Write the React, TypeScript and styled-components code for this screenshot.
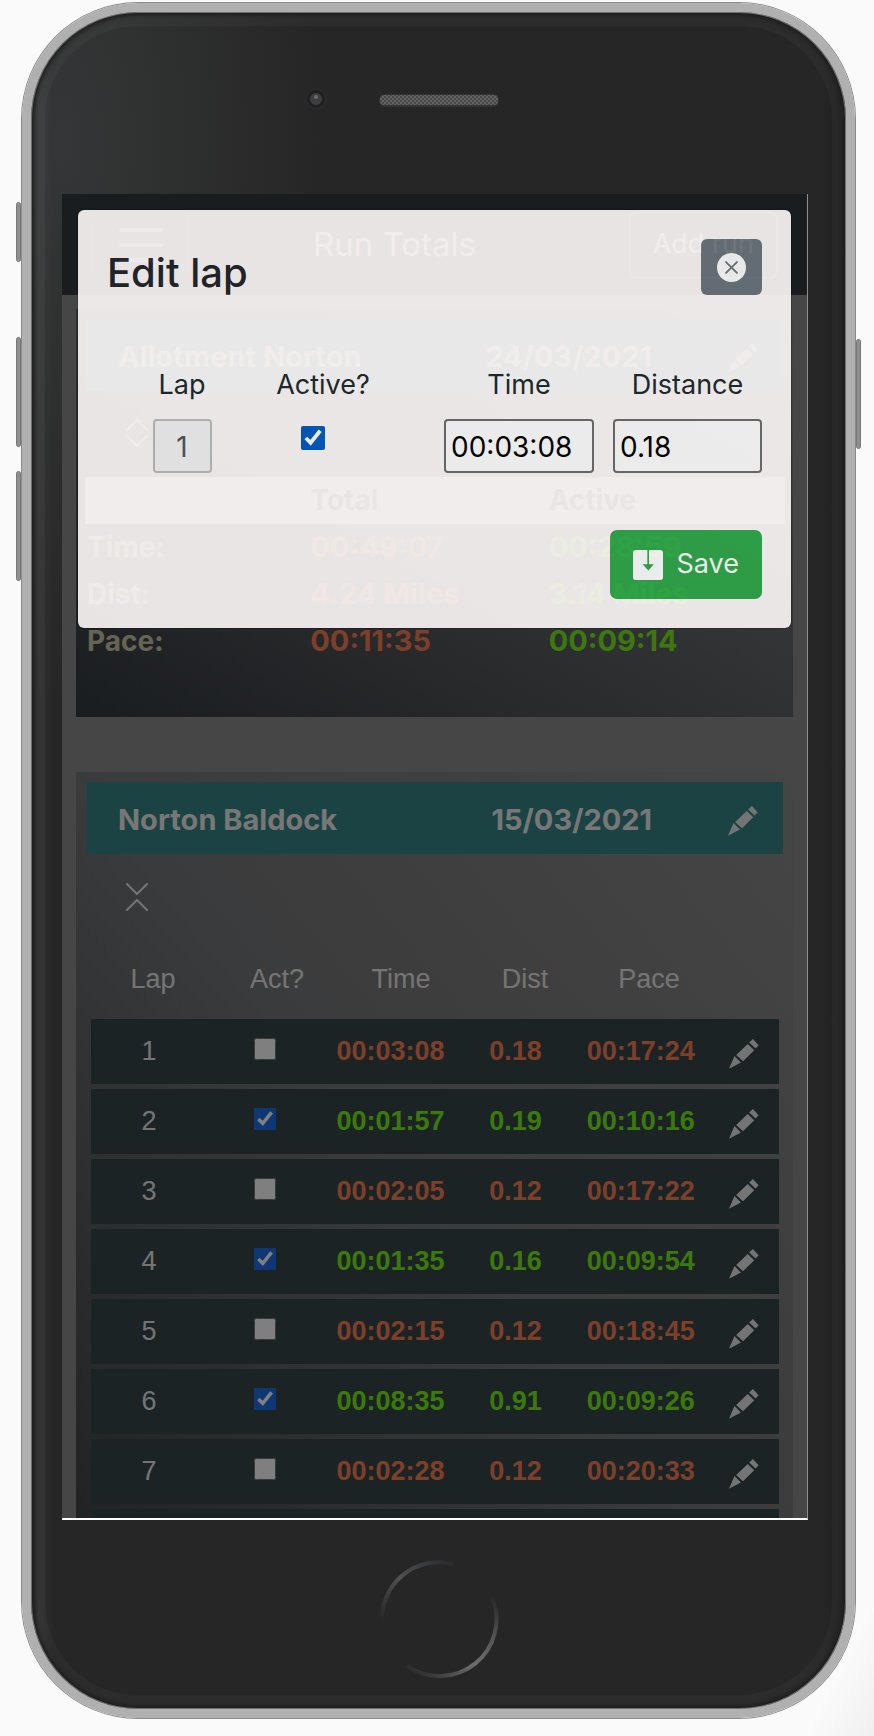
import React from "react";
import styled, { createGlobalStyle, css } from "styled-components";
import { BsXCircleFill } from "react-icons/bs";

const GlobalStyle = createGlobalStyle`
  *, *::before, *::after { box-sizing: border-box; }
  body {
    margin: 0;
    background: #fafafa;
    font-family: Inter, "Liberation Sans", sans-serif;
    font-size: 27px;
    line-height: 1.2;
  }
  button, input { font: inherit; margin: 0; }
  h1, h2, h3 { margin: 0; }
`;

const Page = styled.main`
  min-height: 100vh;
  padding: 3px 19px 0 22px;
  background: linear-gradient(to bottom right, #fafafa 96%, #efefef);
`;

/* ---------- device ---------- */

const Phone = styled.div`
  position: relative;
  display: flex;
  flex-direction: column;
  aspect-ratio: 833 / 1715;
  border: 9px solid #b0b0b0;
  border-radius: 116px;
  background:
    radial-gradient(ellipse 260px 560px at 30px 130px, rgba(76, 78, 80, 0.4), rgba(60, 60, 60, 0)),
    linear-gradient(to right, #242424 0, #303030 8px, #262626 22px, #262626 97%, #202020);
  box-shadow:
    inset 0 0 0 1px #6e6e6e,
    inset 0 0 4px 3px #1c1c1c,
    inset 0 0 0 14px rgba(255, 255, 255, 0.03),
    0 0 0 1px #8a8a8a;
`;

const SideButton = styled.span<{ $side: "left" | "right"; $top: number; $length: number }>`
  position: absolute;
  ${(p) => p.$side}: -15px;
  top: ${(p) => p.$top}px;
  width: 5px;
  height: ${(p) => p.$length}px;
  border: 1px solid #777;
  border-radius: 3px;
  background: #8f8f8f;
`;

const TopBezel = styled.div`
  flex: 0 0 182px;
  display: flex;
  justify-content: center;
  padding-top: 74px;
`;

const BottomBezel = styled.div`
  flex: 0 0 189px;
  display: flex;
  justify-content: center;
  padding-top: 37px;
`;

const Screen = styled.div`
  position: relative;
  flex: 1 1 0;
  min-height: 0;
  margin: 0 38px 0 31px;
  overflow: hidden;
  background: #8c8c8c;
  border-right: 1px solid #8e8e8e;
  border-bottom: 2px solid #fff;
`;

/* ---------- app behind the dialog ---------- */

const NavBar = styled.header`
  display: flex;
  align-items: center;
  height: 101px;
  padding: 0 29px 0 30px;
  background: #343a40;
  color: #fff;
`;

const NavButton = styled.button`
  display: flex;
  align-items: center;
  justify-content: center;
  height: 68px;
  padding: 0 22px;
  border: 2px solid rgba(255, 255, 255, 0.3);
  border-radius: 8px;
  background: none;
  color: #fff;
`;

const MenuButton = styled(NavButton)`
  width: 98px;
  border-color: rgba(255, 255, 255, 0.08);
  color: rgba(255, 255, 255, 0.6);
`;

const NavTitle = styled.h1`
  flex: 1;
  padding-left: 123px;
  font-size: 33px;
  font-weight: 400;
`;

const RunList = styled.div`
  display: flex;
  flex-direction: column;
  gap: 55px;
  padding: 14px;
`;

const Card = styled.section<{ $open?: boolean }>`
  padding: 10px 10px 52px 11px;
  background: ${(p) =>
    p.$open
      ? "linear-gradient(to top right, #3a3e42, #74777a 50%, #7c7a7a 60%, #8c8c8c)"
      : "linear-gradient(to top right, #343a40, #7e7e7e 85%, #8c8c8c)"};
`;

const CardBar = styled.div`
  display: flex;
  align-items: center;
  height: 72px;
  padding: 5px 25px 0 31px;
  background: #378686;
  color: #eee;
  font-size: 29px;
  font-weight: 700;
`;

const RunName = styled.h2`
  flex: 1;
  font-size: 29px;
  font-weight: 700;
`;

const RunDate = styled.span`
  margin-right: 76px;
`;

const IconButton = styled.button`
  display: flex;
  margin: 0 auto;
  padding: 0;
  border: 0;
  background: none;
  color: #e8e8e8;
`;

const Toggle = styled.div`
  display: flex;
  align-items: center;
  height: 86px;
  width: 100px;
`;

const Totals = styled.table`
  display: block;
  margin: 0 -2px;
  font-size: 29px;
  font-weight: 700;
  tbody, thead { display: block; }
  tr {
    display: grid;
    align-items: center;
    grid-template-columns: 223fr 238fr 238fr;
    height: 47px;
  }
  thead tr { background: #fffafa; color: #4c5258; }
  th, td { padding: 0 2px; text-align: left; }
  th { font-size: 28px; }
  tbody th { color: #ccc8a4; }
`;

const tone = css<{ $active?: boolean }>`
  color: ${(p) => (p.$active ? "#78f018" : "#f87e54")};
`;

const TotalCell = styled.td<{ $active?: boolean }>`
  ${tone}
`;

const Laps = styled.table`
  display: block;
  margin: 0 4px;
  font-family: "Liberation Sans", Arial, sans-serif;
  font-size: 27px;
  text-align: center;
  color: #e8e8e8;
  thead, tbody { display: block; }
  tr { display: grid; align-items: center; }
  th, td { padding: 0; font-weight: 400; }
`;

const LapsHead = styled.tr`
  height: 79px;
  grid-template-columns: repeat(5, 124fr) 68fr;
`;

const LapRow = styled.tr`
  height: 65px;
  margin-bottom: 5px;
  grid-template-columns: 116fr 115fr 136fr 114fr 136fr 70fr;
  background: #364648;
`;

const LapValue = styled.td<{ $active?: boolean }>`
  && { font-weight: 700; }
  ${tone}
`;

const EditCell = styled.td`
  && { padding-top: 5px; }
`;

const CheckCell = styled.td`
  && { padding-bottom: 5px; }
`;

const Check = styled.input<{ $size: number }>`
  display: block;
  width: ${(p) => p.$size}px;
  height: ${(p) => p.$size}px;
  margin: 0 auto;
  accent-color: #1e6ee6;
`;

/* ---------- dialog ---------- */

const Backdrop = styled.div`
  position: absolute;
  inset: 0;
  padding: 15px 15px 0 15px;
  background: rgba(0, 0, 0, 0.5);
`;

const Dialog = styled.form`
  padding: 29px;
  border: 1px solid rgba(0, 0, 0, 0.2);
  border-radius: 7px;
  background: #fefaf9;
  background-clip: padding-box;
  color: #212529;
  opacity: 0.9;
`;

const DialogHead = styled.div`
  display: flex;
  justify-content: space-between;
  align-items: flex-start;
  height: 124px;
`;

const DialogTitle = styled.h2`
  padding-top: 10px;
  font-size: 40px;
  font-weight: 500;
`;

const CloseButton = styled.button`
  display: flex;
  align-items: center;
  justify-content: center;
  width: 61px;
  height: 56px;
  padding: 0;
  border: 0;
  border-radius: 6px;
  background: #6c757d;
  color: #fff;
`;

const Fields = styled.div`
  display: grid;
  grid-template-columns: 150fr 187fr 169fr 149fr;
`;

const Field = styled.div<{ $end?: number }>`
  display: flex;
  flex-direction: column;
  align-items: center;
  padding-right: ${(p) => p.$end ?? 0}px;
`;

const Label = styled.label`
  height: 56px;
  padding-top: 6px;
`;

const TextBox = styled.input`
  width: 100%;
  height: 54px;
  padding: 2px 5px 0;
  border: 2px solid #6b6b6b;
  border-radius: 4px;
  background: #fff;
  color: #000;
  font-size: 28px;
`;

const LapBox = styled(TextBox)`
  width: 59px;
  text-align: center;
  border-color: #bcbcbc;
  background: #f4f4f4;
  color: #545454;
`;

const ActiveCheck = styled(Check)`
  margin: 7px 20px 0 0;
  accent-color: #0058c4;
`;

const DialogFoot = styled.div`
  display: flex;
  justify-content: flex-end;
  padding-top: 57px;
`;

const SaveButton = styled.button`
  display: flex;
  align-items: center;
  gap: 14px;
  height: 69px;
  padding: 0 23px;
  border: 0;
  border-radius: 7px;
  background: #2ea849;
  color: #fff;
`;

/* ---------- drawings ---------- */

const Pencil = () => (
  <svg width="30" height="30" viewBox="0 0 88 88" fill="currentColor" aria-hidden="true">
    <path d="M70 0 87 18 78 28 59 10ZM55 15 74 33 41 65 21 47ZM16 50 35 69 0 87Z" />
  </svg>
);

const Chevrons = ({ open }: { open?: boolean }) => (
  <svg width="32" height="32" viewBox="0 0 32 32" fill="none" stroke="currentColor" strokeWidth="2" strokeLinecap="round" strokeLinejoin="round" aria-hidden="true">
    {open ? <path d="M6 3 16 13 26 3M6 29 16 19 26 29" /> : <path d="M6 12 16 2 26 12M6 18 16 28 26 18" />}
  </svg>
);

const MenuIcon = () => (
  <svg width="44" height="34" viewBox="0 0 44 34" stroke="currentColor" strokeWidth="4" strokeLinecap="round" aria-hidden="true">
    <path d="M2 2H42M2 17H42M2 32H42" />
  </svg>
);

const SaveIcon = () => (
  <svg width="30" height="30" viewBox="0 0 88 88" fill="currentColor" aria-hidden="true">
    <path d="M8 0H42V42H28L45 60 61 42H47V0H80Q88 0 88 8V80Q88 88 80 88H8Q0 88 0 80V8Q0 0 8 0Z" />
  </svg>
);

const CameraAndSpeaker = () => (
  <svg width="270" height="30" viewBox="0 0 270 30" aria-hidden="true">
    <defs>
      <pattern id="mesh" width="4" height="4" patternUnits="userSpaceOnUse">
        <rect width="4" height="4" fill="#484848" />
        <rect width="2" height="2" fill="#626262" />
        <rect x="2" y="2" width="2" height="2" fill="#626262" />
      </pattern>
    </defs>
    <circle cx="12" cy="13" r="11" fill="#2a2a2a" />
    <circle cx="12" cy="13" r="9" fill="#202022" />
    <circle cx="12" cy="13" r="6" fill="#3c3e40" />
    <circle cx="12" cy="11" r="2" fill="#6a6c6e" />
    <rect x="75" y="8" width="120" height="13" rx="6" fill="#343434" />
    <rect x="76" y="9" width="118" height="10" rx="4" fill="url(#mesh)" />
  </svg>
);

const HomeButton = () => (
  <svg width="124" height="124" viewBox="0 0 124 124" fill="none" strokeWidth="4" aria-hidden="true">
    <defs>
      <linearGradient id="arcTop" x1="0" y1="1" x2="1" y2="0">
        <stop offset="0" stopColor="#262626" />
        <stop offset="0.5" stopColor="#505050" />
        <stop offset="1" stopColor="#282a2c" />
      </linearGradient>
      <linearGradient id="arcLow" x1="0.1" y1="1" x2="1" y2="0">
        <stop offset="0" stopColor="#2a2a2a" />
        <stop offset="0.4" stopColor="#6c6e6e" />
        <stop offset="0.7" stopColor="#555" />
        <stop offset="1" stopColor="#262626" />
      </linearGradient>
    </defs>
    <path d="M5 66A57 57 0 0 1 76 7" stroke="url(#arcTop)" />
    <path d="M30 109A57 57 0 0 0 115 40" stroke="url(#arcLow)" />
  </svg>
);

/* ---------- data ---------- */

const laps = [
  { time: "00:03:08", dist: "0.18", pace: "00:17:24", active: false },
  { time: "00:01:57", dist: "0.19", pace: "00:10:16", active: true },
  { time: "00:02:05", dist: "0.12", pace: "00:17:22", active: false },
  { time: "00:01:35", dist: "0.16", pace: "00:09:54", active: true },
  { time: "00:02:15", dist: "0.12", pace: "00:18:45", active: false },
  { time: "00:08:35", dist: "0.91", pace: "00:09:26", active: true },
  { time: "00:02:28", dist: "0.12", pace: "00:20:33", active: false },
];

const totals = [
  { label: "Time:", total: "00:49:07", active: "00:28:59" },
  { label: "Dist:", total: "4.24 Miles", active: "3.14 Miles" },
  { label: "Pace:", total: "00:11:35", active: "00:09:14" },
];

const RunBar = ({ name, date }: { name: string; date: string }) => (
  <CardBar>
    <RunName>{name}</RunName>
    <RunDate>{date}</RunDate>
    <IconButton type="button" aria-label={`Edit ${name}`}>
      <Pencil />
    </IconButton>
  </CardBar>
);

export default function App() {
  return (
    <>
      <GlobalStyle />
      <Page>
        <Phone>
          <SideButton $side="left" $top={190} $length={60} />
          <SideButton $side="left" $top={325} $length={110} />
          <SideButton $side="left" $top={459} $length={110} />
          <SideButton $side="right" $top={327} $length={110} />
          <TopBezel>
            <CameraAndSpeaker />
          </TopBezel>
          <Screen>
            <NavBar>
              <MenuButton type="button" aria-label="Menu">
                <MenuIcon />
              </MenuButton>
              <NavTitle>Run Totals</NavTitle>
              <NavButton type="button">Add run</NavButton>
            </NavBar>
            <RunList>
              <Card>
                <RunBar name="Allotment Norton" date="24/03/2021" />
                <Toggle>
                  <IconButton type="button" aria-label="Show laps">
                    <Chevrons />
                  </IconButton>
                </Toggle>
                <Totals>
                  <thead>
                    <tr>
                      <td />
                      <th scope="col">Total</th>
                      <th scope="col">Active</th>
                    </tr>
                  </thead>
                  <tbody>
                    {totals.map((row) => (
                      <tr key={row.label}>
                        <th scope="row">{row.label}</th>
                        <TotalCell>{row.total}</TotalCell>
                        <TotalCell $active>{row.active}</TotalCell>
                      </tr>
                    ))}
                  </tbody>
                </Totals>
              </Card>
              <Card $open>
                <RunBar name="Norton Baldock" date="15/03/2021" />
                <Toggle>
                  <IconButton type="button" aria-label="Hide laps">
                    <Chevrons open />
                  </IconButton>
                </Toggle>
                <Laps>
                  <thead>
                    <LapsHead>
                      <th scope="col">Lap</th>
                      <th scope="col">Act?</th>
                      <th scope="col">Time</th>
                      <th scope="col">Dist</th>
                      <th scope="col">Pace</th>
                    </LapsHead>
                  </thead>
                  <tbody>
                    {laps.map((lap, i) => (
                      <LapRow key={i}>
                        <td>{i + 1}</td>
                        <CheckCell>
                          <Check type="checkbox" $size={22} checked={lap.active} readOnly aria-label={`Lap ${i + 1} active`} />
                        </CheckCell>
                        <LapValue $active={lap.active}>{lap.time}</LapValue>
                        <LapValue $active={lap.active}>{lap.dist}</LapValue>
                        <LapValue $active={lap.active}>{lap.pace}</LapValue>
                        <EditCell>
                          <IconButton type="button" aria-label={`Edit lap ${i + 1}`}>
                            <Pencil />
                          </IconButton>
                        </EditCell>
                      </LapRow>
                    ))}
                    <LapRow />
                  </tbody>
                </Laps>
              </Card>
            </RunList>
            <Backdrop>
              <Dialog role="dialog" aria-labelledby="dialog-title" onSubmit={(e) => e.preventDefault()}>
                <DialogHead>
                  <DialogTitle id="dialog-title">Edit lap</DialogTitle>
                  <CloseButton type="button" aria-label="Close">
                    <BsXCircleFill size={29} />
                  </CloseButton>
                </DialogHead>
                <Fields>
                  <Field>
                    <Label htmlFor="lap">Lap</Label>
                    <LapBox id="lap" defaultValue="1" disabled />
                  </Field>
                  <Field $end={55}>
                    <Label htmlFor="active">Active?</Label>
                    <ActiveCheck id="active" type="checkbox" $size={24} defaultChecked />
                  </Field>
                  <Field $end={19}>
                    <Label htmlFor="time">Time</Label>
                    <TextBox id="time" defaultValue="00:03:08" />
                  </Field>
                  <Field>
                    <Label htmlFor="distance">Distance</Label>
                    <TextBox id="distance" defaultValue="0.18" />
                  </Field>
                </Fields>
                <DialogFoot>
                  <SaveButton type="submit">
                    <SaveIcon />
                    Save
                  </SaveButton>
                </DialogFoot>
              </Dialog>
            </Backdrop>
          </Screen>
          <BottomBezel>
            <HomeButton />
          </BottomBezel>
        </Phone>
      </Page>
    </>
  );
}
